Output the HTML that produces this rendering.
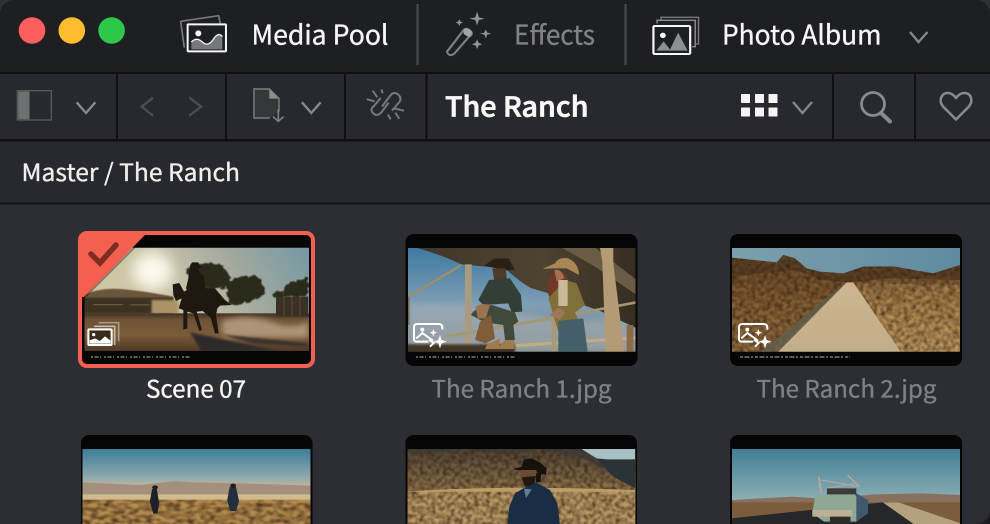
<!DOCTYPE html>
<html><head><meta charset="utf-8"><style>
html,body{margin:0;padding:0;background:#2d2e33;width:990px;height:524px;overflow:hidden}
svg{display:block;position:absolute;left:0;top:0}
text{font-family:"Noto Sans CJK JP","Liberation Sans",sans-serif;stroke-width:.35px;paint-order:stroke}
</style></head><body>
<svg width="990" height="524" viewBox="0 0 990 524" xmlns="http://www.w3.org/2000/svg">
<defs>
<filter id="soft" x="-2%" y="-2%" width="104%" height="104%" color-interpolation-filters="sRGB"><feGaussianBlur stdDeviation=".45"/></filter>
<filter id="b1" x="-20%" y="-20%" width="140%" height="140%"><feGaussianBlur stdDeviation="1.500"/></filter>
<filter id="b2" x="-20%" y="-20%" width="140%" height="140%"><feGaussianBlur stdDeviation="3"/></filter>
<filter id="b3" x="-30%" y="-50%" width="160%" height="200%"><feGaussianBlur stdDeviation="9"/></filter>
<filter id="bs" x="-80%" y="-80%" width="260%" height="260%"><feGaussianBlur stdDeviation="20"/></filter>
<filter id="rough" x="-15%" y="-15%" width="130%" height="130%" color-interpolation-filters="sRGB"><feTurbulence type="fractalNoise" baseFrequency=".07" numOctaves="3" seed="4" result="n"/><feDisplacementMap in="SourceGraphic" in2="n" scale="18" xChannelSelector="R" yChannelSelector="G"/><feGaussianBlur stdDeviation="1.500"/></filter>
<filter id="grain" x="0" y="0" width="100%" height="100%" color-interpolation-filters="sRGB"><feTurbulence type="fractalNoise" baseFrequency=".085" numOctaves="2" seed="7"/><feColorMatrix type="matrix" values="0 0 0 0 .2  0 0 0 0 .12  0 0 0 0 .05  1.800 0 0 0 -.62"/><feGaussianBlur stdDeviation="2"/><feComposite in2="SourceAlpha" operator="in"/></filter>
<filter id="grainL" x="0" y="0" width="100%" height="100%" color-interpolation-filters="sRGB"><feTurbulence type="fractalNoise" baseFrequency=".07" numOctaves="2" seed="21"/><feColorMatrix type="matrix" values="0 0 0 0 .88  0 0 0 0 .74  0 0 0 0 .52  1.800 0 0 0 -.68"/><feGaussianBlur stdDeviation="2"/><feComposite in2="SourceAlpha" operator="in"/></filter>
<linearGradient id="s1" x1="0" x2="1" y1="0.2" y2="0"><stop offset="0" stop-color="#cfc6a4"/><stop offset=".3" stop-color="#c9c4a8"/><stop offset=".62" stop-color="#a3a99e"/><stop offset="1" stop-color="#7398a3"/></linearGradient>
<linearGradient id="g1" x1="0" x2="0" y1="0" y2="1"><stop offset="0" stop-color="#3f3022"/><stop offset=".16" stop-color="#6e5236"/><stop offset=".55" stop-color="#7a5c39"/><stop offset="1" stop-color="#4a3524"/></linearGradient>
<linearGradient id="s2" x1="0" x2="0" y1="0" y2="1"><stop offset="0" stop-color="#3a789f"/><stop offset=".55" stop-color="#7f9eb5"/><stop offset="1" stop-color="#7f8480"/></linearGradient>
<linearGradient id="roof" x1="0" x2="1" y1="0" y2="0"><stop offset="0" stop-color="#40362a"/><stop offset=".6" stop-color="#4e4231"/><stop offset="1" stop-color="#352d22"/></linearGradient>
<linearGradient id="s3" x1="0" x2="1" y1="0" y2="0"><stop offset="0" stop-color="#7ba0ad"/><stop offset="1" stop-color="#5f8a9f"/></linearGradient>
<linearGradient id="g3" x1="0" x2="0" y1="0" y2="1"><stop offset="0" stop-color="#7a5630"/><stop offset=".5" stop-color="#a57c45"/><stop offset="1" stop-color="#b89260"/></linearGradient>
<linearGradient id="r3" x1="0" x2="0" y1="0" y2="1"><stop offset="0" stop-color="#cdb690"/><stop offset="1" stop-color="#c2ad8a"/></linearGradient>
<linearGradient id="s4" x1="0" x2="0" y1="0" y2="1"><stop offset="0" stop-color="#3a7c98"/><stop offset=".7" stop-color="#8ba8ac"/><stop offset="1" stop-color="#c8b8a0"/></linearGradient>
<linearGradient id="s6" x1="0" x2="0" y1="0" y2="1"><stop offset="0" stop-color="#3f7d94"/><stop offset="1" stop-color="#8fb0b4"/></linearGradient>
<linearGradient id="m5" x1="0" x2="0" y1="0" y2="1"><stop offset="0" stop-color="#4f463a"/><stop offset=".55" stop-color="#967a50"/><stop offset="1" stop-color="#86683f"/></linearGradient>
<clipPath id="c1"><rect x="84.500" y="247.700" width="224.500" height="104"/></clipPath>
<clipPath id="c2"><rect x="408" y="248" width="227.500" height="103.700"/></clipPath>
<clipPath id="c3"><rect x="732" y="248" width="228" height="103.700"/></clipPath>
<clipPath id="c4"><rect x="82.500" y="449" width="228" height="75"/></clipPath>
<clipPath id="c5"><rect x="407.500" y="449" width="228" height="75"/></clipPath>
<clipPath id="c6"><rect x="732" y="449" width="228" height="75"/></clipPath>
</defs>

<!-- window chrome -->
<rect width="990" height="524" fill="#2d2e33"/>
<rect width="990" height="72" fill="#1e1f23"/>
<rect y="72" width="990" height="2" fill="#101012"/>
<rect y="74" width="990" height="65" fill="#28292e"/>
<rect y="139" width="990" height="2.500" fill="#101012"/>
<rect y="141.500" width="990" height="61.500" fill="#28292e"/>
<rect y="202.500" width="990" height="2" fill="#141416"/>
<path d="M0 14V0H14A14 14 0 0 0 0 14Z" fill="#2f3034"/>
<path d="M976 0H990V14A14 14 0 0 0 976 0Z" fill="#2f3034"/>
<path d="M990 510V524H976A14 14 0 0 0 990 510Z" fill="#1c1c20"/>
<g fill="#101012">
<rect x="116" y="74" width="2" height="65"/><rect x="225" y="74" width="2" height="65"/><rect x="344" y="74" width="2" height="65"/><rect x="425.500" y="74" width="2" height="65"/><rect x="832" y="74" width="2" height="65"/><rect x="914" y="74" width="2" height="65"/>
</g>
<rect x="416.500" y="4" width="2" height="61" fill="#4b4c50"/>
<rect x="624.500" y="4" width="2" height="61" fill="#4b4c50"/>

<!-- traffic lights -->
<circle cx="32" cy="30.500" r="13.300" fill="#ff5f5c"/>
<circle cx="71.800" cy="30.500" r="13.300" fill="#ffbd2e"/>
<circle cx="111.600" cy="30.500" r="13.300" fill="#2dc84a"/>

<!-- media pool icon -->
<g transform="scale(.3333)">
<path d="M553 143L542 64 656 47 661 70" fill="none" stroke="#77787a" stroke-width="5"/>
<rect x="563" y="73" width="115" height="81" fill="#1e1f23" stroke="#f8f8f8" stroke-width="6" rx="2"/>
<circle cx="595" cy="100" r="9" fill="#f8f8f8"/>
<path d="M574 148V128Q590 110 607 126T640 118 667 110V148Z" fill="#77787a"/>
<path d="M574 126Q590 110 607 126T640 118 667 110" fill="none" stroke="#f4f4f4" stroke-width="4"/>
</g>
<text x="251.500" y="44.500" font-size="27" fill="#f6f6f6" stroke="#f6f6f6" textLength="137" lengthAdjust="spacingAndGlyphs">Media Pool</text>

<!-- effects icon -->
<g transform="translate(420,0) scale(.3636,.3333)">
<path d="M78 150L120 90Q128 82 138 92T135 110L95 160Q85 170 78 162T78 150Z" fill="none" stroke="#808184" stroke-width="6"/>
<path d="M120 88Q128 82 138 90T135 112L120 102Z" fill="#a2a3a5"/>
<g fill="#929395">
<path d="M157 35L162 52 178 56 162 60 157 76 152 60 136 56 152 52Z"/>
<path d="M181 88L185 98 197 101 185 104 181 115 177 104 165 101 177 98Z"/>
<path d="M157 118L161 128 171 133 161 137 157 147 153 137 143 133 153 128Z"/>
<path d="M108 58L111 64 118 68 111 71 108 78 105 71 98 68 105 64Z"/>
</g>
</g>
<text x="514" y="44.500" font-size="27" fill="#808185" stroke="#808185" textLength="81" lengthAdjust="spacingAndGlyphs">Effects</text>

<!-- photo album icon -->
<g transform="translate(420,0) scale(.3636,.3333)">
<path d="M663 62V52H766V132H757" fill="none" stroke="#77787a" stroke-width="4"/>
<path d="M652 70V61H757V140H748" fill="none" stroke="#8b8c8e" stroke-width="4"/>
<rect x="642" y="78" width="101" height="84" rx="3" fill="#1e1f23" stroke="#f8f8f8" stroke-width="6"/>
<circle cx="668" cy="106" r="8" fill="#f8f8f8"/>
<path d="M650 152L670 124 690 152ZM686 152L710 98 736 152Z" fill="#8e8f91"/>
</g>
<text x="722" y="44.500" font-size="27" fill="#f6f6f6" stroke="#f6f6f6" textLength="159.500" lengthAdjust="spacingAndGlyphs">Photo Album</text>
<path d="M910 32L918.500 42 927.500 32" fill="none" stroke="#85868a" stroke-width="2.400"/>

<!-- toolbar left -->
<g transform="scale(.3333)">
<rect x="52" y="272" width="102" height="88" fill="none" stroke="#58595c" stroke-width="4"/>
<rect x="54" y="274" width="34" height="84" fill="#6f7072" stroke="#58595c" stroke-width="3"/>
<path d="M230 307L258 339 286 307" fill="none" stroke="#88898c" stroke-width="7"/>
<path d="M459 293L425 320 459 347" fill="none" stroke="#4c4d51" stroke-width="7"/>
<path d="M568 293L604 320 568 347" fill="none" stroke="#4c4d51" stroke-width="7"/>
<path d="M810 354H762V267H808L837 296V335" fill="#36373b" stroke="#727376" stroke-width="5"/>
<path d="M808 267V296H837Z" fill="#8d8e90"/>
<path d="M835 328V362M819 350L835 364 851 350" fill="none" stroke="#808184" stroke-width="5"/>
<path d="M906 307L934 339 962 307" fill="none" stroke="#88898c" stroke-width="7"/>
<g fill="none" stroke="#77787b" stroke-width="6">
<path d="M1146 320L1170 288Q1182 272 1195 284T1195 310L1176 332"/>
<path d="M1166 308L1146 335Q1132 352 1120 340T1122 318L1142 294"/>
<path d="M1100 298L1124 304M1118 272L1132 292M1145 268L1148 280M1212 332L1184 326M1172 358L1164 344M1198 356L1186 338"/>
</g>
</g>

<!-- toolbar right -->
<text x="445" y="116.500" font-size="27" font-weight="500" fill="#f8f8f8" stroke="#f8f8f8" style="stroke-width:.7px" textLength="143.500" lengthAdjust="spacingAndGlyphs">The Ranch</text>
<g fill="#f4f4f4">
<rect x="741" y="94" width="9" height="9" rx=".6"/><rect x="755" y="94" width="9" height="9" rx=".6"/><rect x="768.500" y="94" width="9" height="9" rx=".6"/>
<rect x="741" y="107.500" width="9" height="9" rx=".6"/><rect x="755" y="107.500" width="9" height="9" rx=".6"/><rect x="768.500" y="107.500" width="9" height="9" rx=".6"/>
</g>
<path d="M793 102L802.500 113 812 102" fill="none" stroke="#85868a" stroke-width="2.400"/>
<circle cx="873" cy="104" r="11.500" fill="none" stroke="#8a8b8e" stroke-width="2.800"/>
<path d="M881 113L890 121.500" stroke="#8a8b8e" stroke-width="4" stroke-linecap="round"/>
<path d="M956 119.500L943.500 107Q939.500 102.500 941 98T947 93Q952 92.500 956 98Q960 92.500 965 93T971 98Q972.500 102.500 968.500 107Z" fill="none" stroke="#8a8b8e" stroke-width="2.500" stroke-linejoin="round"/>

<text x="21.500" y="181" font-size="24" fill="#efefef" stroke="#efefef" textLength="218.500" lengthAdjust="spacingAndGlyphs">Master / The Ranch</text>

<!-- Thumb 1 -->
<rect x="80" y="233" width="233" height="133" rx="7" fill="#060607" stroke="#f4604f" stroke-width="4"/>
<g clip-path="url(#c1)">
<g transform="translate(80,245) scale(.3333)" filter="url(#soft)">
<rect x="10" y="0" width="680" height="210" fill="url(#s1)"/>
<ellipse cx="218" cy="78" rx="60" ry="55" fill="#fbf9ec" filter="url(#bs)"/>
<path d="M10 150Q60 128 120 132T280 155V170H10Z" fill="#6a563b" filter="url(#b1)"/>
<rect x="10" y="158" width="270" height="48" fill="#3d3022" filter="url(#b1)"/>
<rect x="215" y="165" width="80" height="42" fill="#ab9367" filter="url(#b2)"/>
<path d="M40 178H130M150 180H210" stroke="#7d6a4c" stroke-width="4" filter="url(#b1)"/>
<rect x="10" y="205" width="680" height="118" fill="url(#g1)"/>
<path d="M425 230Q500 200 600 240Q650 250 685 230V278H430Z" fill="#ac9578" filter="url(#b3)"/>
<path d="M330 262L600 320H365Z" fill="#2e2a2b" filter="url(#b2)"/>
<path d="M420 268L680 295 680 305 520 295Z" fill="#3a302a" filter="url(#b2)"/>
<g fill="#2c2a1a" filter="url(#rough)">
<path d="M320 75Q350 50 405 55 445 60 450 100 445 125 430 130L340 130Z"/>
<path d="M435 115Q470 90 530 95 560 120 550 150 510 180 450 178Z"/>
<path d="M615 125Q640 100 685 100V155H600Z"/>
<path d="M580 145Q590 135 605 140L605 160H585Z"/>
</g>
<rect x="588" y="155" width="97" height="60" fill="#3b3024"/>
<path d="M612 155V215M636 155V215M660 155V215" stroke="#5c4b37" stroke-width="3"/>
<g fill="#1e1811">
<path d="M330 62L336 52H355L360 62 368 66 352 72 372 95 376 140 330 152 318 130 325 100Z"/>
<path d="M278 118L298 114 312 140 335 128 405 130 435 165 455 180 420 182 412 190 408 210 416 265H405L392 218 368 198 350 200 366 255 358 258 340 205 322 200 322 250 310 254 310 195 296 190 305 160 288 168 280 150Z"/>
</g>
<rect x="10" y="318" width="680" height="10" fill="#060607"/>
</g>
</g>
<!-- corner flag -->
<path d="M82 239Q82 235 86 235H145L84 297H82Z" fill="#f4604f"/>
<path d="M84 298L146 236" stroke="#000" stroke-opacity=".35" stroke-width="2"/>
<path d="M91 254L100 263 116 245" fill="none" stroke="#7e2c24" stroke-width="5.500" stroke-linecap="round"/>
<!-- stack icon -->
<g transform="translate(80,315) scale(.3333)">
<g fill="none" stroke-width="5">
<path d="M58 26H118V82" stroke="#fff" stroke-opacity=".4" transform="translate(-2,-3)"/>
<path d="M46 36H108V92" stroke="#fff" stroke-opacity=".6" transform="translate(-4,-2)"/>
</g>
<rect x="25" y="43" width="70" height="47" rx="3" fill="none" stroke="#fff" stroke-width="6"/>
<rect x="29" y="47" width="62" height="39" fill="#3a2a1c"/>
<circle cx="41" cy="59" r="5" fill="#fff"/>
<path d="M29 86V76L45 70 60 78 75 64 91 76V86Z" fill="#fff"/>
</g>
<path d="M91 357H191" stroke="#7a7a7a" stroke-width="1.500" stroke-dasharray="2 1.500 4 1.500 1 3"/>
<text x="146" y="397.500" font-size="24" fill="#f5f5f5" stroke="#f5f5f5" textLength="100" lengthAdjust="spacingAndGlyphs">Scene 07</text>

<!-- Thumb 2 -->
<rect x="405.500" y="234" width="232" height="132" rx="8" fill="#060607"/>
<g clip-path="url(#c2)">
<g transform="translate(395,225) scale(.3333)" filter="url(#soft)">
<rect x="30" y="60" width="700" height="325" fill="url(#s2)"/>
<path d="M40 240Q200 225 480 285L720 290V380H40Z" fill="#a8b0b6" opacity=".55" filter="url(#b3)"/>
<path d="M30 60H725V310L620 260Q500 215 410 190 380 175 330 130L200 118Q120 80 30 60Z" fill="url(#roof)"/>
<path d="M500 68H600L725 165V210L600 125Z" fill="#6a5c44"/>
<path d="M40 215L200 120" stroke="#a08d6a" stroke-width="7"/>
<path d="M40 215V300" stroke="#7a6a50" stroke-width="7"/>
<rect x="210" y="118" width="20" height="262" fill="#a99b7f"/>
<path d="M150 335L470 280 725 232" stroke="#a89670" stroke-width="8" fill="none"/>
<path d="M360 362L725 338" stroke="#c2ad82" stroke-width="9"/>
<rect x="470" y="280" width="14" height="100" fill="#a89878"/>
<path d="M615 68H655V115L688 380H632L622 110Z" fill="#b39c75"/>
<rect x="695" y="300" width="20" height="80" fill="#8a6b44"/>
<rect x="30" y="358" width="330" height="27" fill="#3f3428" filter="url(#b2)"/>
<!-- man -->
<path d="M268 122L298 100 340 100 360 134 330 136 295 128Z" fill="#2a2015"/>
<path d="M292 130H332L336 170 300 180Z" fill="#4d3a29"/>
<path d="M282 165L345 160 378 210 382 260 350 262 340 235 265 240 250 225Z" fill="#333f36"/>
<path d="M228 270Q240 245 290 240L360 262 370 290 355 300 360 345 330 345 325 300 290 295 265 290Z" fill="#3f4a3b"/>
<path d="M242 245Q260 232 285 240L272 280H248Z" fill="#9a7350"/>
<path d="M255 290L288 270 300 340 272 355 240 345Z" fill="#7f5c3a"/>
<path d="M275 360L315 340 312 372H270ZM330 345H358V372H305Z" fill="#a07a4a"/>
<!-- woman -->
<path d="M442 132L480 115Q490 95 520 100 552 115 552 150L515 130 470 130Z" fill="#a98654"/>
<path d="M460 170Q470 135 500 140 525 155 525 190L530 230 478 235Q450 210 460 170Z" fill="#6f3a25"/>
<path d="M478 135Q500 130 508 160L485 168Z" fill="#a86e52"/>
<path d="M460 220L510 165 545 175 570 240 540 262 570 330 490 320 478 280Z" fill="#7f6f38"/>
<rect x="490" y="165" width="28" height="78" fill="#c9b998"/>
<path d="M490 288L565 280 578 380H490Z" fill="#445f68"/>
<path d="M465 270L490 248 510 260 495 285Z" fill="#a07658"/>
</g>
</g>
<g transform="translate(405,315) scale(.3333)">
<path d="M70 80H35Q27 80 27 72V37Q27 27 37 27H100Q112 27 112 37V44" fill="none" stroke="#fff" stroke-width="6"/>
<circle cx="52" cy="44" r="6" fill="#fff"/>
<path d="M34 70L52 54 84 77M75 95L86 84 72 74" fill="none" stroke="#fff" stroke-width="6"/>
<path d="M105 60L110 75 125 80 110 85 105 100 100 85 85 80 100 75Z" fill="#fff"/>
<path d="M85 42L88 50 96 53 88 56 85 64 82 56 74 53 82 50Z" fill="#fff"/>
</g>
<path d="M416 357H516" stroke="#7a7a7a" stroke-width="1.500" stroke-dasharray="2 1.500 4 1.500 1 3"/>
<text x="431.500" y="397.500" font-size="24" fill="#7f8084" stroke="#7f8084" textLength="180" lengthAdjust="spacingAndGlyphs">The Ranch 1.jpg</text>

<!-- Thumb 3 -->
<rect x="730" y="234" width="232" height="132" rx="8" fill="#060607"/>
<g clip-path="url(#c3)">
<g transform="translate(720,225) scale(.3333)" filter="url(#soft)">
<rect x="30" y="60" width="700" height="140" fill="url(#s3)"/>
<path d="M35 98L170 112 190 90 225 100 260 130 300 140 370 145 430 125 520 124 640 145 720 120V240H35Z" fill="#5e4228"/>
<path d="M35 155L230 135 300 165 380 172 400 172 500 160 720 165V385H35Z" fill="url(#g3)"/>
<path d="M35 150L230 135 300 165 380 175 125 380H35Z" fill="#6a4a28" opacity=".45"/>
<path d="M35 98L170 112 190 90 225 100 260 130 300 140 370 145 430 125 520 124 640 145 720 120V385H35Z" filter="url(#grain)"/>
<path d="M410 175L720 180V385H540Z" filter="url(#grainL)" opacity=".6"/>
<path d="M375 172L125 378 170 385 382 175Z" fill="#5e5a48" opacity=".85"/>
<path d="M380 172H400L545 385H170Z" fill="url(#r3)"/>
</g>
</g>
<g transform="translate(730,315) scale(.3333)">
<path d="M70 80H35Q27 80 27 72V37Q27 27 37 27H100Q112 27 112 37V44" fill="none" stroke="#fff" stroke-width="6"/>
<circle cx="52" cy="44" r="6" fill="#fff"/>
<path d="M34 70L52 54 84 77M75 95L86 84 72 74" fill="none" stroke="#fff" stroke-width="6"/>
<path d="M105 60L110 75 125 80 110 85 105 100 100 85 85 80 100 75Z" fill="#fff"/>
<path d="M85 42L88 50 96 53 88 56 85 64 82 56 74 53 82 50Z" fill="#fff"/>
</g>
<path d="M740 357H850" stroke="#7a7a7a" stroke-width="1.500" stroke-dasharray="3 1.500 5 1.500 2 2"/>
<text x="756.500" y="397.500" font-size="24" fill="#7f8084" stroke="#7f8084" textLength="180" lengthAdjust="spacingAndGlyphs">The Ranch 2.jpg</text>

<!-- Row 2 -->
<rect x="81" y="435" width="231.500" height="100" rx="8" fill="#060607"/>
<g clip-path="url(#c4)">
<g transform="translate(70,425) scale(.5868,.3333)" filter="url(#soft)">
<rect x="20" y="70" width="392" height="120" fill="url(#s4)"/>
<path d="M20 172L120 180 180 168 210 172 290 175 410 182V215H20Z" fill="#a38f7c"/>
<rect x="20" y="208" width="392" height="18" fill="#d0bb8f"/>
<rect x="20" y="224" width="392" height="75" fill="#b88f52"/>
<rect x="20" y="224" width="392" height="75" filter="url(#grain)"/>
<path d="M140 192L148 192 152 235 149 266H142L136 230Z" fill="#1d2228"/><ellipse cx="145" cy="187" rx="5" ry="6" fill="#241c14"/>
<path d="M272 186H283L288 228 283 258H273L268 225Z" fill="#22303e"/><ellipse cx="278" cy="182" rx="5" ry="6" fill="#241c14"/>
</g>
</g>
<rect x="405.500" y="435" width="231.500" height="100" rx="8" fill="#060607"/>
<g clip-path="url(#c5)">
<g transform="translate(400,440) scale(.3333)" filter="url(#soft)">
<rect x="20" y="27" width="690" height="230" fill="url(#m5)"/>
<path d="M20 27H705V160H20Z" filter="url(#grain)"/>
<path d="M20 27H545L590 58 620 56 705 58V135L620 95 540 50 420 30 300 40 200 30 100 40 20 30Z" fill="#38383a" opacity=".7" filter="url(#b2)"/>
<path d="M590 55L705 55V145L640 110Z" fill="#2c3336"/>
<path d="M545 27H705V58H620L590 55Z" fill="#a8c1c5"/>
<path d="M20 155Q300 135 705 150V255H20Z" fill="#bd9d68"/>
<path d="M20 155H705V255H20Z" filter="url(#grain)"/>
<path d="M338 88L365 80 372 58 395 55 420 68 440 85 438 105 405 96 365 92Z" fill="#15120e"/>
<path d="M362 90H410V122L405 135H368L362 118Z" fill="#6b4935"/>
<path d="M365 112L408 108 402 138 375 140Z" fill="#20170f"/>
<path d="M408 100L424 98 422 125 408 128Z" fill="#15120e"/>
<path d="M370 145L408 128 450 150 472 190 480 255H322L328 200 345 160Z" fill="#1b2d44"/>
<path d="M372 146L395 148 378 175Z" fill="#5d7d99"/>
</g>
</g>
<rect x="730" y="435" width="232" height="100" rx="8" fill="#060607"/>
<g clip-path="url(#c6)">
<g transform="translate(70,425) scale(.5868,.3333)" filter="url(#soft)">
<rect x="1128" y="70" width="392" height="160" fill="url(#s6)"/>
<path d="M1128 225L1230 215 1290 222 1370 208 1450 205 1518 210V240H1128Z" fill="#87705f"/>
<rect x="1128" y="232" width="392" height="70" fill="#7b5d3d"/>
<path d="M1128 280L1385 232H1412L1520 296V300H1128Z" fill="#26272a"/>
<path d="M1385 232H1412L1520 296V300H1440Z" fill="#b5a07f"/>
<path d="M1270 212L1330 208 1360 225 1358 265 1340 290H1285L1265 265Z" fill="#8ea894"/>
<path d="M1335 200L1360 225V265L1340 290V215Z" fill="#3f5a6e"/>
<path d="M1276 155L1280 205M1280 165L1345 185M1325 150L1345 185M1290 190L1340 175" stroke="#b8a89c" stroke-width="3" fill="none"/>
<path d="M1290 190H1340V208H1290Z" fill="#3c3a36"/>
<rect x="1265" y="255" width="68" height="20" fill="#bdaf96"/>
<rect x="1295" y="275" width="35" height="20" fill="#2e2c2a"/>
</g>
</g>
</svg>
</body></html>
